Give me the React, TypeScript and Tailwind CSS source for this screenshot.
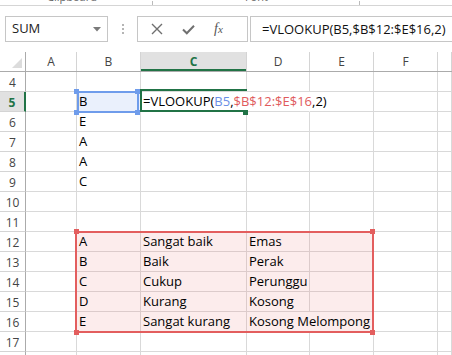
import type { ReactNode } from 'react'

const colClasses = ['w-[51px]', 'w-[64px]', 'w-[106px]', 'w-[63px]', 'w-[64px]', 'w-[64px]', 'flex-1']
const colNames = ['A', 'B', 'C', 'D', 'E', 'F', 'G']

const data: Record<number, Record<string, string>> = {
  5: { B: 'B' },
  6: { B: 'E' },
  7: { B: 'A' },
  8: { B: 'A' },
  9: { B: 'C' },
  12: { B: 'A', C: 'Sangat baik', D: 'Emas' },
  13: { B: 'B', C: 'Baik', D: 'Perak' },
  14: { B: 'C', C: 'Cukup', D: 'Perunggu' },
  15: { B: 'D', C: 'Kurang', D: 'Kosong' },
  16: { B: 'E', C: 'Sangat kurang', D: 'Kosong Melompong' },
}

const rows = [4, 5, 6, 7, 8, 9, 10, 11, 12, 13, 14, 15, 16, 17, 18]

function Formula() {
  return (
    <span className="relative z-10 whitespace-nowrap">
      =VLOOKUP(<span className="text-[#6b8fe6]">B5</span>,<span className="text-[#e05a5c]">$B$12:$E$16</span>,2)
    </span>
  )
}

function Cell({ row, col, index }: { row: number; col: string; index: number }) {
  const inRange = row >= 12 && row <= 16 && ['B', 'C', 'D', 'E'].includes(col)
  const hideRight = (row === 5 && (col === 'C' || col === 'D')) || (row === 16 && col === 'D')
  let content: ReactNode = data[row]?.[col] ?? ''
  if (row === 5 && col === 'C') content = <Formula />

  return (
    <div
      className={[
        'flex h-full shrink-0 items-center overflow-visible whitespace-nowrap border-b pl-[2px] pt-[1px]',
        colClasses[index],
        inRange ? 'bg-[#fcecec] border-[#dccbcb]' : 'border-[#d9d9d9]',
        row === 5 && col === 'B' ? 'bg-[#eaf0fc]' : '',
        hideRight ? 'border-r border-r-transparent' : 'border-r',
      ].join(' ')}
    >
      {typeof content === 'string' ? <span className="relative z-10">{content}</span> : content}
    </div>
  )
}

function Square({ className }: { className: string }) {
  return <div className={'absolute h-[5px] w-[5px] ' + className} />
}

export default function App() {
  return (
    <div className="h-[355px] w-[452px] overflow-hidden bg-white font-['Open_Sans',sans-serif] text-[13px] text-black">
      {/* ribbon remnant */}
      <div className="flex h-[6px] overflow-hidden border-b border-[#d5d5d5] text-[11px] leading-[12px] text-[#666]">
        <span className="ml-[47px] -translate-y-[9px]">Clipboard</span>
        <span className="ml-[55px] mt-[1px] h-[4px] w-[1px] bg-[#bbb]" />
        <span className="ml-[92px] -translate-y-[9px]">Font</span>
        <span className="ml-[91px] mt-[1px] h-[4px] w-[1px] bg-[#bbb]" />
      </div>

      {/* formula bar */}
      <div className="mt-[10px] flex h-[26px] items-stretch">
        <div className="ml-[5px] flex w-[103px] items-center justify-between border border-[#c6c6c6] pl-[6px] pr-[6px] text-[13px] text-[#222]">
          <span>SUM</span>
          <svg width="8" height="5" viewBox="0 0 8 5">
            <path d="M0 0 H8 L4 4.5 Z" fill="#7a7a7a" />
          </svg>
        </div>
        <div className="ml-[13px] flex w-[3px] flex-col items-center justify-center gap-[2px]">
          <span className="h-[2px] w-[2px] bg-[#b5b5b5]" />
          <span className="h-[2px] w-[2px] bg-[#b5b5b5]" />
          <span className="h-[2px] w-[2px] bg-[#b5b5b5]" />
        </div>
        <div className="ml-[13px] flex w-[111px] items-center border border-[#c6c6c6]">
          <svg className="ml-[13px]" width="12" height="12" viewBox="0 0 12 12">
            <path d="M1 1 L11 11 M11 1 L1 11" stroke="#6f6f6f" strokeWidth="1.4" />
          </svg>
          <svg className="ml-[19px]" width="13" height="11" viewBox="0 0 13 11">
            <path d="M1 5.5 L4.8 9.3 L12 1.8" stroke="#707070" strokeWidth="2" fill="none" />
          </svg>
          <span className="ml-[19px] font-['Liberation_Serif',serif] text-[14px] italic leading-none text-[#555]">
            f<span className="text-[11px]">x</span>
          </span>
        </div>
        <div className="ml-[2px] flex flex-1 items-center border-y border-l border-[#c6c6c6] pl-[11px] pt-[1px] text-[#111]">
          =VLOOKUP(B5,$B$12:$E$16,2)
        </div>
      </div>

      {/* sheet */}
      <div className="relative mt-[10px]">
        <div className="flex h-[20px] border-b border-[#ababab] text-[12px] text-[#444]">
          <div className="flex w-[26px] shrink-0 items-end justify-end border-r border-[#ababab] pb-[3px] pr-[3px]">
            <svg width="10" height="10" viewBox="0 0 10 10">
              <path d="M10 0 V10 H0 Z" fill="#dcdcdc" />
            </svg>
          </div>
          {colNames.map((c, i) => (
            <div
              key={c}
              className={[
                'flex shrink-0 items-center justify-center border-r border-[#d4d4d4]',
                colClasses[i],
                c === 'C' ? 'bg-[#e1e1e1] font-bold text-[#217346] shadow-[inset_0_-2px_0_#217346]' : '',
              ].join(' ')}
            >
              {c === 'G' ? '' : c}
            </div>
          ))}
        </div>

        {rows.map((r) => (
          <div key={r} className="flex h-[20px]">
            <div
              className={[
                'flex w-[26px] shrink-0 items-center justify-center border-b border-r pt-[2px] text-[12px]',
                r === 5
                  ? 'border-b-[#d4d4d4] border-r-[#217346] border-r-2 bg-[#e1e1e1] font-bold text-[#217346]'
                  : 'border-b-[#d4d4d4] border-r-[#ababab] text-[#444]',
              ].join(' ')}
            >
              {r}
            </div>
            {colNames.map((c, i) => (
              <Cell key={c} row={r} col={c} index={i} />
            ))}
          </div>
        ))}

        {/* selection B5 */}
        <div className="absolute left-[77px] top-[39px] h-[22px] w-[62px] border-2 border-[#6f9ceb]" />
        <Square className="left-[74px] top-[37px] bg-[#6f9ceb]" />
        <Square className="left-[135px] top-[37px] bg-[#6f9ceb]" />
        <Square className="left-[74px] top-[58px] bg-[#6f9ceb]" />
        <Square className="left-[135px] top-[58px] bg-[#6f9ceb]" />

        {/* active cell C5 */}
        <div className="absolute left-[140px] top-[37px] h-[23px] w-[107px] border-y-2 border-l-2 border-[#217346] border-b-0" />
        <div className="absolute left-[140px] top-[58px] h-[2px] w-[103px] bg-[#217346]" />
        <Square className="left-[243px] top-[58px] h-[5px] bg-[#217346]" />

        {/* range B12:E16 */}
        <div className="absolute left-[75px] top-[179px] h-[102px] w-[299px] border-2 border-[#e35e5e]" />
        <Square className="left-[74px] top-[177px] bg-[#e35e5e]" />
        <Square className="left-[370px] top-[177px] bg-[#e35e5e]" />
        <Square className="left-[74px] top-[278px] bg-[#e35e5e]" />
        <Square className="left-[370px] top-[278px] bg-[#e35e5e]" />
      </div>
    </div>
  )
}
